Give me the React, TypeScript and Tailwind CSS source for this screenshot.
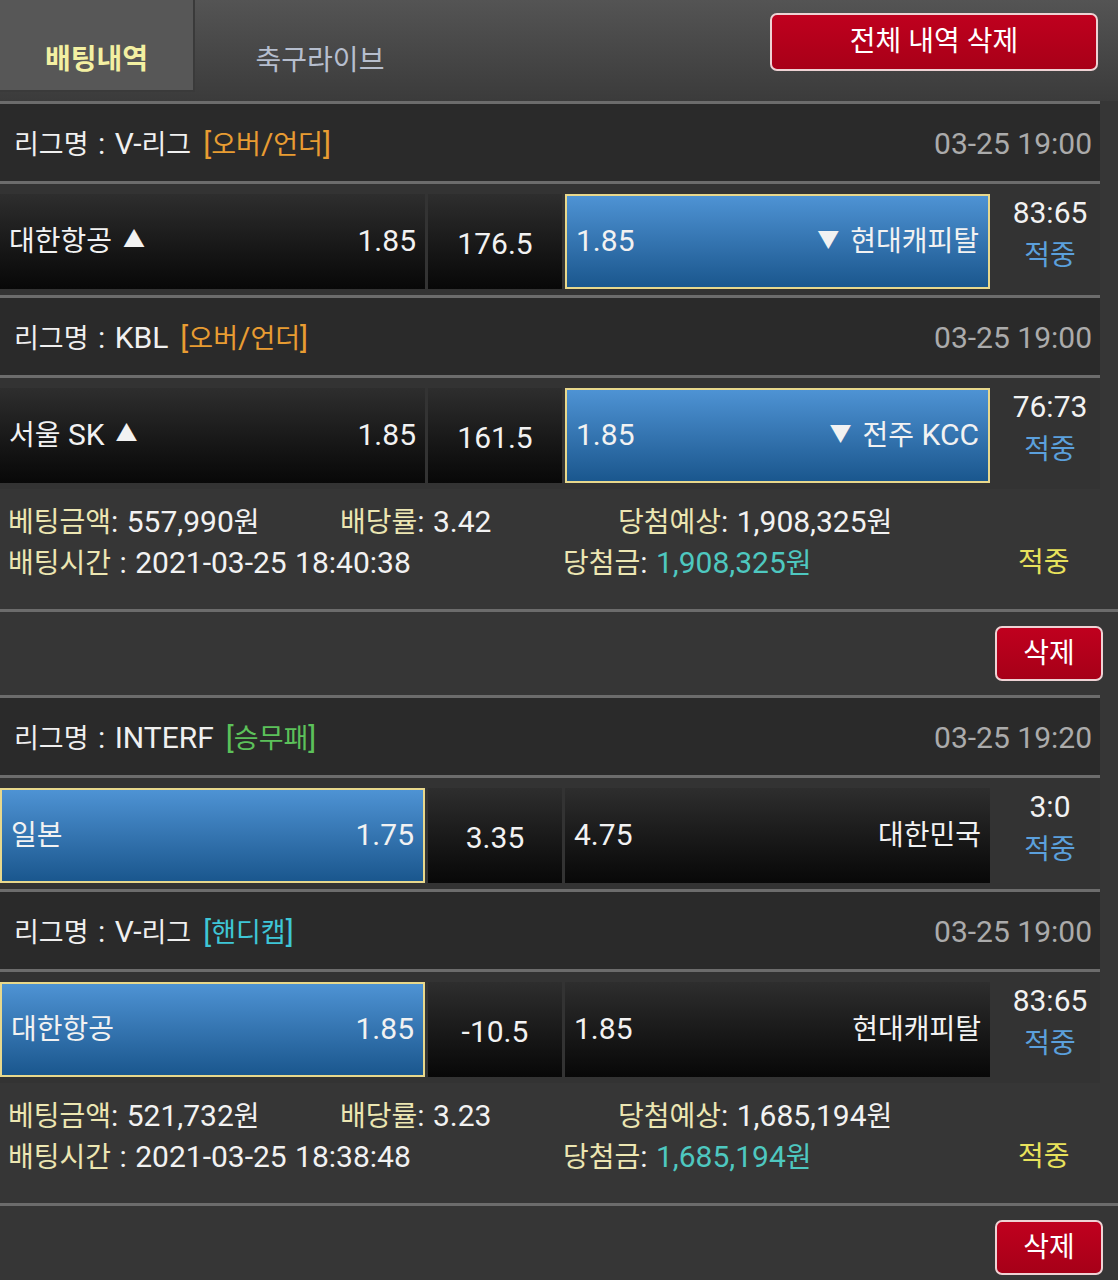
import React from 'react';

interface Match {
  league: string;
  type: string;
  typeColor: string;
  time: string;
  home: string;
  homeOdds: string;
  homeMark?: string;
  mid: string;
  away: string;
  awayOdds: string;
  awayMark?: string;
  pick: 'home' | 'away';
  score: string;
}

interface Bet {
  matches: Match[];
  amount: string;
  rate: string;
  expected: string;
  betTime: string;
  win: string;
}

const BETS: Bet[] = [
  {
    matches: [
      {
        league: 'V-리그', type: '[오버/언더]', typeColor: 'text-[#e89c32]', time: '03-25 19:00',
        home: '대한항공', homeOdds: '1.85', homeMark: '▲', mid: '176.5',
        away: '현대캐피탈', awayOdds: '1.85', awayMark: '▼', pick: 'away', score: '83:65',
      },
      {
        league: 'KBL', type: '[오버/언더]', typeColor: 'text-[#e89c32]', time: '03-25 19:00',
        home: '서울 SK', homeOdds: '1.85', homeMark: '▲', mid: '161.5',
        away: '전주 KCC', awayOdds: '1.85', awayMark: '▼', pick: 'away', score: '76:73',
      },
    ],
    amount: '557,990원', rate: '3.42', expected: '1,908,325원',
    betTime: '2021-03-25 18:40:38', win: '1,908,325원',
  },
  {
    matches: [
      {
        league: 'INTERF', type: '[승무패]', typeColor: 'text-[#5cc15a]', time: '03-25 19:20',
        home: '일본', homeOdds: '1.75', mid: '3.35',
        away: '대한민국', awayOdds: '4.75', pick: 'home', score: '3:0',
      },
      {
        league: 'V-리그', type: '[핸디캡]', typeColor: 'text-[#3ec6d6]', time: '03-25 19:00',
        home: '대한항공', homeOdds: '1.85', mid: '-10.5',
        away: '현대캐피탈', awayOdds: '1.85', pick: 'home', score: '83:65',
      },
    ],
    amount: '521,732원', rate: '3.23', expected: '1,685,194원',
    betTime: '2021-03-25 18:38:48', win: '1,685,194원',
  },
];

// 한글은 기본 크기, 숫자/영문은 조금 크게 (원본 폰트 폭 맞추기)
const mix = (text: string) =>
  text.split(/([\uAC00-\uD7A3]+)/).map((part, i) =>
    /[\uAC00-\uD7A3]/.test(part) ? (
      <span key={i}>{part}</span>
    ) : (
      <span key={i} className="text-[30px]">{part}</span>
    )
  );

const Line = ({ full }: { full?: boolean }) => (
  <div className={full ? 'h-[3px] w-full bg-[#6c6c6c]' : 'h-[3px] w-[1100px] bg-[#6c6c6c]'} />
);

const cellDark = 'bg-gradient-to-b from-[#2e2e2e] to-[#080808]';
const cellBlue = 'bg-gradient-to-b from-[#4e93d4] to-[#1a578e] border-2 border-[#e8d88c]';

const Mark = ({ m }: { m: string }) => <span className="text-[22px] relative top-[-2px]">{m}</span>;

const MatchBlock = ({ m }: { m: Match }) => (
  <>
    <Line />
    <div className="w-[1100px] h-[77px] bg-[#2a2a2a] flex items-center justify-between pl-[14px] pr-[8px] pt-[4px] text-[27px] leading-[36px] [word-spacing:2px]">
      <div className="flex items-center">
        <span className="text-[#f0f0f0]">{mix(`리그명 : ${m.league}`)}</span>
        <span className={`${m.typeColor} ml-[12px]`}>{mix(m.type)}</span>
      </div>
      <span className="text-[#ababab] [word-spacing:0px]">{mix(m.time)}</span>
    </div>
    <Line />
    <div className="w-[1100px] bg-[#333333] pt-[10px] pb-[6px] flex text-[28px] leading-[36px] text-[#f2f2f2]">
      <div className={`w-[425px] h-[95px] flex items-center justify-between pl-[9px] pr-[9px] ${m.pick === 'home' ? cellBlue : cellDark}`}>
        <span className="flex items-center gap-[11px]">
          <span>{mix(m.home)}</span>
          {m.homeMark && <Mark m={m.homeMark} />}
        </span>
        <span>{mix(m.homeOdds)}</span>
      </div>
      <div className={`w-[134px] h-[95px] mx-[3px] flex items-center justify-center pt-[4px] ${cellDark}`}>
        {mix(m.mid)}
      </div>
      <div className={`w-[425px] h-[95px] flex items-center justify-between pl-[9px] pr-[9px] ${m.pick === 'away' ? cellBlue : cellDark}`}>
        <span>{mix(m.awayOdds)}</span>
        <span className="flex items-center gap-[11px]">
          {m.awayMark && <Mark m={m.awayMark} />}
          <span>{mix(m.away)}</span>
        </span>
      </div>
      <div className="w-[110px] pl-[10px] flex flex-col items-center leading-[38px] gap-[4px]">
        <span className="text-[#f2f2f2]">{mix(m.score)}</span>
        <span className="text-[#5ba0dc]">적중</span>
      </div>
    </div>
  </>
);

const BetBlock = ({ bet }: { bet: Bet }) => (
  <div>
    {bet.matches.map((m, i) => (
      <MatchBlock key={i} m={m} />
    ))}
    <div className="h-[120px] pt-[13px] pl-[8px] text-[28px] leading-[40px] text-[#f2f2f2] [word-spacing:1px]">
      <div className="flex">
        <span className="w-[332px]">
          <span className="text-[#ece6b2]">베팅금액</span>
          {mix(`: ${bet.amount}`)}
        </span>
        <span className="w-[278px]">
          <span className="text-[#ece6b2]">배당률</span>
          {mix(`: ${bet.rate}`)}
        </span>
        <span>
          <span className="text-[#ece6b2]">당첨예상</span>
          {mix(`: ${bet.expected}`)}
        </span>
      </div>
      <div className="flex">
        <span className="w-[555px]">
          <span className="text-[#ece6b2]">배팅시간</span>
          {mix(` : ${bet.betTime}`)}
        </span>
        <span className="w-[455px]">
          <span className="text-[#ece6b2]">당첨금</span>
          {mix(': ')}
          <span className="text-[#4ec8c0]">{mix(bet.win)}</span>
        </span>
        <span className="text-[#e8e25c]">적중</span>
      </div>
    </div>
    <Line full />
    <div className="h-[83px] flex justify-end pr-[15px] pt-[14px]">
      <button className="w-[108px] h-[55px] rounded-[7px] border-2 border-[#eed2d4] bg-gradient-to-b from-[#c0001e] to-[#a60018] text-white text-[28px] flex items-center justify-center">
        삭제
      </button>
    </div>
  </div>
);

export default function App() {
  return (
    <div className="w-[1118px] min-h-[1280px] bg-[#363636] overflow-hidden font-[Roboto,'Noto_Sans_CJK_KR',sans-serif]">
      <div className="h-[101px] bg-gradient-to-b from-[#545454] to-[#3b3b3b] flex items-start">
        <div className="w-[195px] h-[92px] bg-[#575757] border-r-2 border-b-2 border-[#3a3a3a] flex items-center justify-center pt-[30px]">
          <span className="text-[28px] font-bold text-[#f3f0a2]">배팅내역</span>
        </div>
        <div className="w-[250px] h-[92px] flex items-center justify-center pt-[30px]">
          <span className="text-[28px] text-[#b6bece]">축구라이브</span>
        </div>
        <div className="flex-1 flex justify-end pr-[20px] pt-[13px]">
          <button className="w-[328px] h-[58px] rounded-[7px] border-2 border-[#eed2d4] bg-gradient-to-b from-[#bf001e] to-[#a80018] text-white text-[28px] flex items-center justify-center">
            전체 내역 삭제
          </button>
        </div>
      </div>
      {BETS.map((b, i) => (
        <BetBlock key={i} bet={b} />
      ))}
    </div>
  );
}
